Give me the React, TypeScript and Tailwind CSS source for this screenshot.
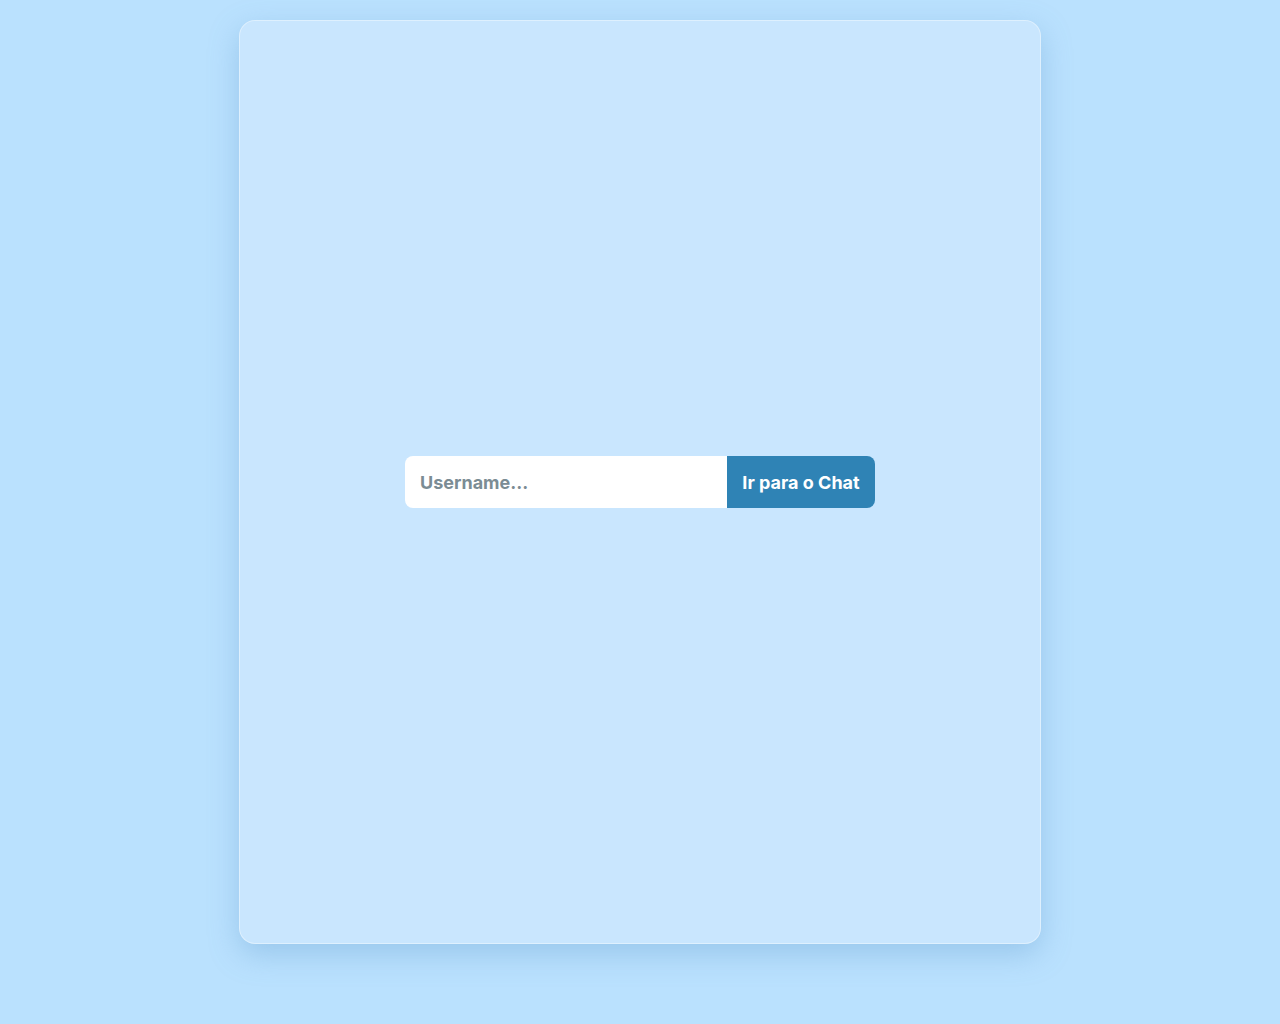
export default function App() {
  return (
    <div className="min-h-screen w-full bg-[#bae1fe] pt-5" style={{ fontFamily: "Inter, 'Noto Sans', sans-serif" }}>
      <div className="mx-auto flex h-[924px] w-[802px] items-center justify-center rounded-2xl border border-white/40 bg-[#c9e6fe] shadow-[0_10px_30px_rgba(90,150,200,0.35)]">
        <div className="flex h-[52px] w-[470px] overflow-hidden rounded-lg">
          <input
            type="text"
            placeholder="Username..."
            className="min-w-0 flex-1 bg-white px-[15px] text-[18px] font-bold text-[#2b3a42] outline-none placeholder:text-[#7b8c94]"
          />
          <button className="w-[148px] bg-[#2f83b5] text-[18px] font-bold text-white">
            Ir para o Chat
          </button>
        </div>
      </div>
    </div>
  );
}
